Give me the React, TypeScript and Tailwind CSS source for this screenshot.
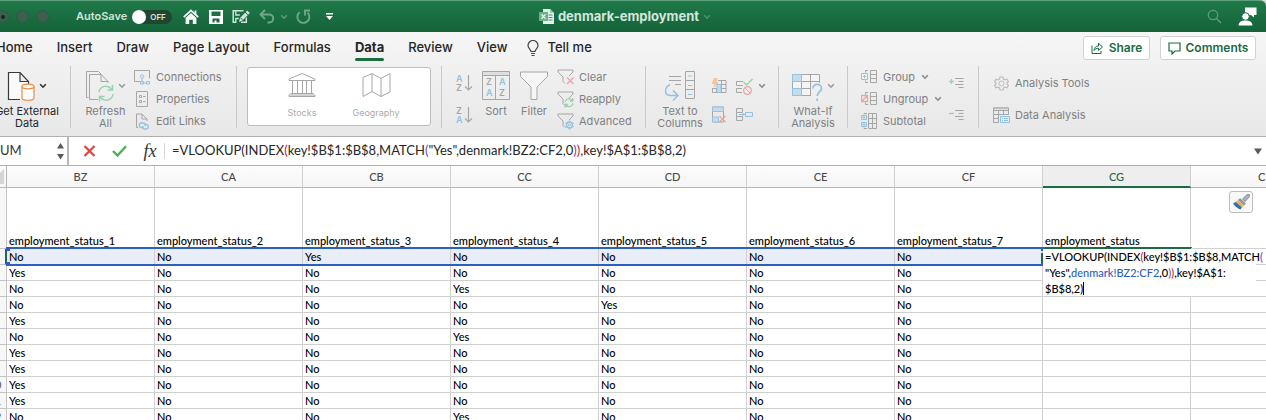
import React from "react";

const G = "#a6a6a6";
const B = "#93c3e2";
const GR = "#98d3b0";
const R = "#f0a3a3";

type IconProps = { w: number; h: number; children: React.ReactNode; stroke?: string };
function Icon({ w, h, children, stroke = G }: IconProps) {
  return (
    <svg width={w} height={h} viewBox={`0 0 ${w} ${h}`} fill="none" stroke={stroke} strokeWidth="1" className="block shrink-0" aria-hidden="true">
      {children}
    </svg>
  );
}

function Chevron({ color = "#8a8a8a" }: { color?: string }) {
  return (
    <Icon w={8} h={6} stroke={color}>
      <path d="M1.2 1.2 4 4.2 6.8 1.2" strokeWidth="1.6" />
    </Icon>
  );
}

function Letter({ x, y, c, children, s = 9 }: { x: number; y: number; c: string; children: string; s?: number }) {
  return (
    <text x={x} y={y} fill={c} stroke="none" fontSize={s} fontFamily="Inter, sans-serif" fontWeight="600">
      {children}
    </text>
  );
}

function TitleBar() {
  return (
    <header className="grid h-8 shrink-0 grid-cols-[1fr_auto_1fr] items-center rounded-tr-md border-t border-[#5f9f7e] bg-linear-to-b from-[#1f7a49] to-[#156239] text-white">
      <div className="-ml-1 flex items-center">
        <div className="flex gap-[7px]">
          <span className="flex size-[13px] items-center justify-center rounded-full border border-[#2b5a41] bg-[#3f5f4e]">
            <span className="size-1 rounded-full bg-[#0e2a1b]" />
          </span>
          <span className="size-[13px] rounded-full border border-[#2b5a41] bg-[#3f5f4e]" />
          <span className="size-[13px] rounded-full border border-[#2b5a41] bg-[#3f5f4e]" />
        </div>
        <span className="ml-[27px] text-[11px] font-semibold text-[#cfe5d9]">AutoSave</span>
        <button aria-label="AutoSave off" className="ml-[5px] flex h-3.5 w-10 items-center rounded-full bg-[#23452f]">
          <span className="size-3.5 rounded-full bg-white" />
          <span className="ml-1 text-[8px] font-semibold text-[#d5e5dc]">OFF</span>
        </button>
        <button aria-label="Home" className="ml-[11px]">
          <Icon w={16} h={15} stroke="#fff">
            <path d="M.8 8.2 8 1.400l7.200 6.800M12.500 1.500v4" strokeWidth="1.8" />
            <path d="M2.600 9 8 4l5.400 5v6H9.800v-4.200H6.200V15H2.600z" fill="#fff" stroke="none" />
          </Icon>
        </button>
        <button aria-label="Save" className="ml-2.5">
          <Icon w={14} h={14} stroke="none">
            <path fillRule="evenodd" d="M0 0h14v14H0zM2.500 1.500v4.500h9v-4.500zM3.500 8.500v4h2v-2h2v2h3v-4z" fill="#fff" />
          </Icon>
        </button>
        <button aria-label="Save as" className="ml-[9px]">
          <Icon w={18} h={15} stroke="#cfe5d9">
            <path d="M11.500 1.700H1.200v11.500h3M14.300 8.500v4.700H9" strokeWidth="1.500" />
            <path d="M3.800 1.500V6h4M3.800 13.500V9.500h3" strokeWidth="1.300" />
            <path d="M7 13l1-4 7.200-7.500 2.600 2.500-7.300 7.500z" fill="#cfe5d9" stroke="none" />
            <path d="M13 3l2.800 2.800M8.500 8.800l2 2" stroke="#1a6c41" />
          </Icon>
        </button>
        <button aria-label="Undo" className="ml-[9px]">
          <Icon w={16} h={15} stroke="#6fa78a">
            <path d="M6 1 1.500 5.500 6 10M2 5.500h8.200a4 4 0 0 1 0 8H8.500" strokeWidth="1.900" />
          </Icon>
        </button>
        <button aria-label="Undo list" className="ml-[5px]"><Chevron color="#5f9c7c" /></button>
        <button aria-label="Repeat" className="ml-2">
          <Icon w={15} h={15} stroke="#6fa78a">
            <path d="M3.600 3.200a6 6 0 1 0 8 .4M9 6.500V1.500h5" strokeWidth="1.900" />
          </Icon>
        </button>
        <button aria-label="Customize toolbar" className="ml-3.5">
          <Icon w={9} h={9} stroke="none">
            <path d="M1 1h7v1.500H1zM1 4h7L4.500 8z" fill="#fff" />
          </Icon>
        </button>
      </div>
      <div className="flex items-center pr-4">
        <Icon w={15} h={15} stroke="none">
          <path d="M4 0h7l4 4v11H4z" fill="#e7f1ec" />
          <path d="M11 0v4h4z" fill="#9cc4ae" />
          <path d="M9.500 6h4M9.500 8.500h4M9.500 11h4" stroke="#3f9a69" />
          <path d="M0 3h9v9H0z" fill="#6db08c" />
          <path d="M2.500 5.300l4 4.400M6.500 5.300l-4 4.400" stroke="#fff" strokeWidth="1.200" />
        </Icon>
        <h1 className="ml-1 text-[13px] font-bold text-[#d3e7dc]">denmark-employment</h1>
        <span className="ml-1"><Chevron color="#4f9270" /></span>
      </div>
      <div className="flex items-center justify-end gap-4 pr-[9px]">
        <button aria-label="Search">
          <Icon w={15} h={15} stroke="#5f9c7c">
            <circle cx="6" cy="6" r="4.700" strokeWidth="1.300" />
            <path d="M9.500 9.500 14 14" strokeWidth="1.500" />
          </Icon>
        </button>
        <button aria-label="Account">
          <Icon w={19} h={19} stroke="none">
            <path d="M7 .5h11.500v7.500H16v2.500L13 8H7z" fill="#fff" />
            <circle cx="7.500" cy="9.500" r="3.800" fill="#fff" stroke="#1a6c41" />
            <path d="M.5 18.500c.5-4 3-5 7-5s6.500 1 7 5z" fill="#fff" />
          </Icon>
        </button>
      </div>
    </header>
  );
}

function Tabs() {
  const tabs = ["Home", "Insert", "Draw", "Page Layout", "Formulas", "Data", "Review", "View"];
  return (
    <nav className="flex h-[30px] shrink-0 items-center justify-between bg-linear-to-b from-[#f6f6f6] to-[#f1f1f1] pt-0.5 pr-2.5">
      <div className="-ml-1 flex items-center gap-6 text-[13px] font-medium text-[#262626]">
        {tabs.map((t) => (
          <button key={t} className={t === "Data" ? "relative font-bold" : ""}>
            {t}
            {t === "Data" && <span className="absolute inset-x-0 -bottom-[3px] h-[3px] rounded-full bg-[#1a6c41]" />}
          </button>
        ))}
        <button className="-ml-1 flex items-center gap-2">
          <Icon w={12} h={16} stroke="#444">
            <path d="M4 11.500c0-2-3-3-3-6a5 5 0 0 1 10 0c0 3-3 4-3 6zM4 13.500h4M4.500 15.500h3" strokeWidth="1.200" />
          </Icon>
          Tell me
        </button>
      </div>
      <div className="flex gap-2.5 text-[12px] font-semibold text-[#1a6c41]">
        <button className="flex h-6 w-[67px] items-center justify-center gap-1.5 rounded-[3px] border border-[#d2d2d2] bg-white">
          <Icon w={12} h={12} stroke="#1a6c41">
            <path d="M1 3.500v8h9V9M3 8.500C3.200 5.500 5 4 7.500 4V1.200L11.500 5 7.500 8.500V6.200C5.500 6.200 4 7 3 8.500z" />
          </Icon>
          Share
        </button>
        <button className="flex h-6 w-24 items-center justify-center gap-[5px] rounded-[3px] border border-[#d2d2d2] bg-white">
          <Icon w={13} h={13} stroke="#1a6c41">
            <path d="M1 1h11v8H7l-3 3V9H1z" strokeWidth="1.200" />
          </Icon>
          Comments
        </button>
      </div>
    </nav>
  );
}

function Group({ className, children }: { className: string; children: React.ReactNode }) {
  return <div className={"flex h-[62px] shrink-0 items-start border-r border-[#c9c9c9] " + className}>{children}</div>;
}

function Small({ icon, label, chevron }: { icon: React.ReactNode; label: string; chevron?: boolean }) {
  return (
    <button className="flex h-[22px] shrink-0 items-center text-[11px] text-[#808080]">
      <span className="mr-1.5 flex w-4 justify-center">{icon}</span>
      {label}
      {chevron && <span className="ml-1.5"><Chevron /></span>}
    </button>
  );
}

function Big({ icon, lines, chevron, className }: { icon: React.ReactNode; lines: string[]; chevron?: string; className: string }) {
  return (
    <button className={"flex flex-col items-center text-[11px] leading-3 " + className}>
      <span className="flex h-[39px] items-center gap-1">
        {icon}
        {chevron && <Chevron color={chevron} />}
      </span>
      {lines.map((l) => (
        <span key={l} className="whitespace-nowrap">{l}</span>
      ))}
    </button>
  );
}

function Funnel({ children }: { children: React.ReactNode }) {
  return (
    <Icon w={17} h={17}>
      <path d="M8 14.500 6 12.500V8L1 3V1h15v2l-4 4" />
      {children}
    </Icon>
  );
}

function Cycle() {
  return <path d="M8 11a4.300 4.300 0 0 1 7.500-1.500M15.800 7v3h-3M16 12.500a4.300 4.300 0 0 1-7.500 1.500M8.200 16.500v-3h3" stroke={GR} strokeWidth="1.300" />;
}

function Bracket({ children }: { children: React.ReactNode }) {
  return (
    <Icon w={16} h={16}>
      <path d="M9.500 1.500h6v12h-6zM9.500 5.500h6M9.500 9.500h6M7 1.500H4.500v2M7 13.500H4.500v-2" />
      {children}
    </Icon>
  );
}

function Ribbon() {
  return (
    <div className="flex h-[74px] shrink-0 overflow-hidden bg-linear-to-b from-[#f1f1f1] to-[#e8e8e8] pt-1">
      <Group className="w-[71px]">
        <Big
          className="-ml-2 w-[70px] text-[#262626]"
          lines={["Get External", "Data"]}
          chevron="#333"
          icon={
            <Icon w={28} h={30} stroke="#383838">
              <path d="M13 28.500H1.500v-27H13l8.500 9V13M13 1.500v9h8.500" fill="#fafafa" strokeWidth="1.200" />
              <path d="M15 15.500v11.500c0 3 12 3 12 0V15.500" fill="#fdfdfd" stroke="#ef8b3f" strokeWidth="1.200" />
              <ellipse cx="21" cy="15.500" rx="6" ry="2.300" fill="#fdfdfd" stroke="#ef8b3f" strokeWidth="1.200" />
            </Icon>
          }
        />
      </Group>
      <Group className="w-[166px]">
        <Big
          className="ml-2.5 w-[49px] text-[#808080]"
          lines={["Refresh", "All"]}
          chevron="#9a9a9a"
          icon={
            <Icon w={28} h={32}>
              <path d="M2.500 27.500h-2v-26h12l3 3M12 29.500H3.500v-25H15l7 7V13M15 4.500v7h7" />
              <path d="M13 22a7 7 0 0 1 12.500-3M26.500 15v5h-5M27 24a7 7 0 0 1-12.500 3.500M13.500 31.500v-5h5" stroke={GR} strokeWidth="1.500" />
            </Icon>
          }
        />
        <div className="ml-1 flex flex-col">
          <Small label="Connections" icon={
            <Icon w={16} h={16}>
              <path d="M6.500 12.500h-6v-11h15v8" />
              <circle cx="8" cy="7.500" r="1.700" stroke={B} /><path d="M8 9.500v2.500M8 14h4" stroke={B} />
              <path d="M6.500 12.500h3v2.500h-3zM12.500 12.500h3v2.500h-3z" stroke={B} />
            </Icon>} />
          <Small label="Properties" icon={
            <Icon w={12} h={16}><path d="M.5.5h11v15H.5zM3.500 4.500h2v2h-2zM3.500 9.500h2v2h-2zM7 5.500h2.500M7 10.500h2.500" /></Icon>} />
          <Small label="Edit Links" icon={
            <Icon w={15} h={17}>
              <path d="M3 14.500H1.500V1H7l5 5v2M7 1v5h5" />
              <path d="M8 14.500H6a2.300 2.300 0 0 1 0-4.500h2.500a2.300 2.300 0 0 1 1.500 3M10 11.500h1.500a2.300 2.300 0 0 1 0 4.500H9.500a2.300 2.300 0 0 1-1.500-3" stroke={B} strokeWidth="1.400" />
            </Icon>} />
        </div>
      </Group>
      <Group className="w-[205px]">
        <div className="ml-2.5 mt-px flex h-[59px] w-[184px] justify-center rounded-[3px] border border-[#bdbdbd] bg-white text-[#ababab]">
          <button className="flex w-[74px] flex-col items-center pt-1 text-[9px]">
            <Icon w={28} h={26}>
              <path d="M1 8.500V7L14 1.500 27 7v1.500zM4.500 9v12M9.500 9v12M14.500 9v12M18.500 9v12M23.500 9v12M2.500 21.500h23M1 24.500v-1.500h26v1.500z" />
            </Icon>
            <span className="mt-2">Stocks</span>
          </button>
          <button className="flex w-[74px] flex-col items-center pt-1 text-[9px]">
            <Icon w={29} h={26}>
              <path d="M1 5.500 10 1.500l9 5 9-5V20l-9 4.500-9-5-9 5zM10 1.500v18M19 6.500v18" />
            </Icon>
            <span className="mt-2">Geography</span>
          </button>
        </div>
      </Group>
      <Group className="w-[204px]">
        <div className="ml-3.5 flex w-4 flex-col gap-3.5 pt-2">
          <button aria-label="Sort ascending">
            <Icon w={17} h={18}>
              <Letter x={0} y={8} c={B}>A</Letter><Letter x={0} y={17} c={G}>Z</Letter>
              <path d="M12.500 1v15M9 12.500l3.500 3.500 3.500-3.500" strokeWidth="1.200" />
            </Icon>
          </button>
          <button aria-label="Sort descending">
            <Icon w={17} h={18}>
              <Letter x={0} y={8} c={G}>Z</Letter><Letter x={0} y={17} c={B}>A</Letter>
              <path d="M12.500 1v15M9 12.500l3.500 3.500 3.500-3.500" strokeWidth="1.200" />
            </Icon>
          </button>
        </div>
        <Big className="ml-1.5 w-9 text-[#808080]" lines={["Sort"]} icon={
          <Icon w={28} h={29}>
            <path d="M.5.5h27v4H.5z" fill="#dedede" />
            <path d="M.5 4.500h27v24H.5zM13.500 4.500v24" />
            <Letter x={4} y={14} c={G}>Z</Letter><Letter x={4} y={25} c={B}>A</Letter>
            <Letter x={17} y={14} c={B}>A</Letter><Letter x={17} y={25} c={G}>Z</Letter>
          </Icon>} />
        <Big className="ml-0.5 w-9 text-[#808080]" lines={["Filter"]} icon={
          <Icon w={28} h={29}><path d="M.5 1h27v4.500L17 16v12.500h-6V16L.5 5.500z" fill="#f6f6f6" /></Icon>} />
        <div className="ml-[5px] flex flex-col">
          <Small label="Clear" icon={<Funnel><path d="M10 8.500l6.500 6.500M16.500 8.500 10 15" stroke={R} strokeWidth="1.300" /></Funnel>} />
          <Small label="Reapply" icon={<Funnel><Cycle /></Funnel>} />
          <Small label="Advanced" icon={
            <Funnel>
              <circle cx="12.500" cy="12" r="3" stroke={B} strokeWidth="1.300" />
              <circle cx="12.500" cy="12" r="1" stroke={B} />
              <path d="M12.500 7.500v2M12.500 14.500v2M8.500 9.800l1.800 1M14.700 13.200l1.800 1M8.500 14.200l1.800-1M14.700 10.800l1.800-1" stroke={B} strokeWidth="1.500" />
            </Funnel>} />
        </div>
      </Group>
      <Group className="w-[133px]">
        <Big className="ml-2.5 w-12 text-[#808080]" lines={["Text to", "Columns"]} icon={
          <Icon w={31} h={30}>
            <path d="M4 5.500h12M4 9.500h12M10 13.500h6M20.500.5h9v27h-9zM20.500 9.500h9M20.500 18.500h9" />
            <path d="M23 5h4M23 14.500h4M23 23.500h4" stroke={B} />
            <path d="M5 13.500C-1.500 17-1 24.500 6 24.500h6M8 19.500l5 5-5 5" stroke={B} strokeWidth="1.500" />
          </Icon>} />
        <div className="ml-1.5 grid grid-cols-[26px_16px_14px] grid-rows-[28px_28px] items-center pt-1.5">
          <button aria-label="Flash fill">
            <Icon w={17} h={17}>
              <path d="M6 5.500V2.500M8 2.500h8v12H2.500V10M6 6.500h10M2.500 10.500H16M6.500 10v4.500M11.500 2.500v12" />
              <path d="M7 6.500h4v8H7z" fill="#c5dcea" stroke={B} />
              <path d="M4 0h4L6 4h3l-6 7 1.500-5H1.500z" fill="#f6c39a" stroke="none" />
            </Icon>
          </button>
          <button aria-label="Data validation">
            <Icon w={17} h={17}>
              <path d="M7 3.500H.5v4H7M6 10.500H.5v4H6" />
              <path d="M7.500 4l3 3 6-6" stroke={GR} strokeWidth="1.400" />
              <circle cx="11.500" cy="12.500" r="3.800" stroke={R} strokeWidth="1.300" /><path d="M9 10l5 5" stroke={R} />
            </Icon>
          </button>
          <span className="ml-1.5"><Chevron /></span>
          <button aria-label="Remove duplicates">
            <Icon w={17} h={17}>
              <path d="M2.500 1h11v15h-11z" /><path d="M2.500 1h11v4.500h-11zM2.500 11h6v5h-6z" fill="#c5dcea" stroke={B} />
              <path d="M9.500 10l6 6M15.500 10l-6 6" stroke={R} strokeWidth="1.300" />
            </Icon>
          </button>
          <button aria-label="Consolidate">
            <Icon w={17} h={15}>
              <path d="M.5 1.500h6v4h-6zM.5 9.500h6v4h-6zM.5 5.500v4" />
              <path d="M9.500 5.500h7v4h-7zM3 7.500h6M6 5.500l2 2-2 2" stroke={B} />
            </Icon>
          </button>
        </div>
      </Group>
      <Group className="w-[69px]">
        <Big className="w-[68px] text-[#808080]" lines={["What-If", "Analysis"]} chevron="#9a9a9a" icon={
          <Icon w={31} h={31}>
            <path d="M.5 4.500h27v21H.5z" fill="#f4f4f4" />
            <path d="M9.500 4.500v21M18.500 4.500v21M.5 11.500h27M.5 18.500h27" />
            <path d="M.5 4.500h9v7h-9zM.5 18.500h9v7h-9z" fill="#c5dcea" stroke={B} />
            <path d="M19 13h11v18H19z" fill="#efefef" stroke="none" />
            <path d="M21 18.500c0-5.500 8.500-5.500 8.500 0 0 3.500-4.300 3-4.300 7.500M25.200 28.500V31" stroke={B} strokeWidth="1.800" />
          </Icon>} />
      </Group>
      <Group className="w-[131px]">
        <div className="ml-[13px] flex w-[88px] flex-col">
          <Small chevron label="Group" icon={<Bracket><path d="M.5 4.500h6v6h-6zM2 7.500h3M3.500 6v3" stroke={B} /></Bracket>} />
          <Small chevron label="Ungroup" icon={<Bracket><path d="M.5 4.500h6v6h-6zM.5 10.500l6-6" stroke={R} strokeWidth="1.300" /></Bracket>} />
          <Small label="Subtotal" icon={
            <Icon w={16} h={16}>
              <path d="M7.500.5h8v15h-8zM7.500 5.500h8M7.500 10.500h8M11.500.5v15M3 1.500V.5h3M3 14.500v1h3" />
              <path d="M.5 2.500h5v4h-5zM.5 9.500h5v4h-5zM1.500 4.500h3M3 3v3M1.500 11.500h3M3 10v3" stroke={B} />
            </Icon>} />
        </div>
        <div className="flex flex-col gap-5 pt-[11px]">
          <button aria-label="Show detail">
            <Icon w={15} h={12}><path d="M6 1.500h8.500M9.500 4.500h5M6 7.500h8.500M9.500 10.500h5" /><path d="M0 4.500h5M2.500 2v5" stroke={GR} strokeWidth="1.300" /></Icon>
          </button>
          <button aria-label="Hide detail">
            <Icon w={15} h={12}><path d="M6 1.500h8.500M9.500 4.500h5M6 7.500h8.500M9.500 10.500h5" /><path d="M0 4.500h5" stroke={R} strokeWidth="1.300" /></Icon>
          </button>
        </div>
      </Group>
      <div className="ml-3.5 flex flex-col gap-2.5 pt-1.5">
        <Small label="Analysis Tools" icon={
          <Icon w={15} h={15} stroke="#bdbdbd">
            <path d="M6 1h3l.5 2 1.500.8 2-.6 1.400 2.500L13 7v1l1.400 1.300-1.400 2.500-2-.6-1.500.8L9 14H6l-.5-2-1.500-.8-2 .6L.6 9.300 2 8V7L.6 5.700 2 3.200l2 .6L5.500 3z" strokeWidth="1.200" />
            <circle cx="7.500" cy="7.500" r="2.500" />
          </Icon>} />
        <Small label="Data Analysis" icon={
          <Icon w={17} h={17}>
            <path d="M6 15.500H.5V1h15v7" /><path d="M.5 1h15v2.500H.5z" fill="#dedede" /><path d="M.5 7.500h15M.5 11.500H6M5.500 4v11.500M10.500 4v4" />
            <path d="M7.500 9.500h9v6h-9zM9 11.500h1M11 11.500h4M9 13.500h1M11 13.500h4" stroke={B} />
          </Icon>} />
      </div>
    </div>
  );
}

const RED = "text-[#d9101f]";
const PURPLE = "text-[#7b3fb5]";

function FormulaBar() {
  return (
    <div className="flex h-[30px] shrink-0 items-stretch border-y border-[#b0b0b0] bg-white">
      <div className="flex w-[69px] items-center border-r-2 border-[#b9b9b9]">
        <input aria-label="Name box" defaultValue="SUM" className="-ml-[7px] w-[60px] bg-transparent font-[Lato] text-[13px] text-[#333] outline-none" />
        <button aria-label="Change name" className="ml-[3px]">
          <Icon w={9} h={18} stroke="none"><path d="M1 6.500 4.500 1 8 6.500zM1 12h7l-3.500 5.500z" fill="#595959" /></Icon>
        </button>
      </div>
      <div className="flex flex-1 items-center">
        <button aria-label="Cancel" className="ml-3.5">
          <Icon w={13} h={12} stroke="#e0443e"><path d="M1.500 1l10 10M11.500 1l-10 10" strokeWidth="2.200" /></Icon>
        </button>
        <button aria-label="Enter" className="ml-4">
          <Icon w={15} h={12} stroke="#4caf50"><path d="M1 6l4.500 4.500L14 1.200" strokeWidth="2.400" /></Icon>
        </button>
        <button aria-label="Insert function" className="ml-[15px] w-4 font-['Liberation_Serif'] text-[18px] leading-5 italic text-[#333]">fx</button>
        <span className="ml-1.5 h-4 w-px bg-[#d5d5d5]" />
        <div role="textbox" aria-label="Formula" contentEditable suppressContentEditableWarning className="ml-[7px] flex-1 font-[Lato] text-[13px] whitespace-nowrap text-[#262626] outline-none">
          =VLOOKUP(INDEX<span className={RED}>(</span>key!$B$1:$B$8,MATCH<span className={PURPLE}>(</span>"Yes",denmark!BZ2:CF2,0<span className={PURPLE}>)</span><span className={RED}>)</span>,key!$A$1:$B$8,2)
        </div>
        <button aria-label="Expand formula bar" className="mr-1">
          <Icon w={8} h={7} stroke="none"><path d="M0 .5h8L4 6.500z" fill="#595959" /></Icon>
        </button>
      </div>
    </div>
  );
}

const columns = ["BZ", "CA", "CB", "CC", "CD", "CE", "CF", "CG"];
const yesColumn = [2, 0, 3, 4, 0, 3, 0, 0, 0, 0, 3];
const yesRows = [true, true, false, false, true, false, true, true, true, true, false];
const cell = "border-r border-b border-[#d0d0d0] p-0 pl-0.5 text-left align-bottom";

function cellText(row: number, col: number) {
  if (col > 6) return null;
  const hit = yesColumn[row] === col && (col !== 0 || yesRows[row]);
  return hit ? "Yes" : "No";
}

function CellEditor() {
  return (
    <div role="textbox" aria-label="Cell CG2" className="absolute top-0 left-0 z-20 w-[213px] bg-white pl-0.5 leading-4 whitespace-nowrap">
      <div>=VLOOKUP(INDEX<span className={RED}>(</span>key!$B$1:$B$8,MATCH<span className={PURPLE}>(</span></div>
      <div>"Yes",<span className="text-[#2b5fc0]">denmark!BZ2:CF2</span>,0<span className={PURPLE}>)</span><span className={RED}>)</span>,key!$A$1:</div>
      <div className="h-[15px]"><span className="border-r border-black">$B$8,2)</span></div>
      <span className="absolute top-1 -left-0.5 h-2.5 w-0.5 bg-[#1a6c41]" />
    </div>
  );
}

function Selection() {
  const handle = "absolute size-1 bg-[#2b5fc0]";
  return (
    <div className="pointer-events-none absolute -top-0.5 left-0 z-10 h-[19px] w-[1036px] border-y-2 border-[#2b5fc0]">
      <span className={handle + " -top-0.5 -left-px"} />
      <span className={handle + " -bottom-0.5 -left-px"} />
      <span className={handle + " -top-0.5 -right-0.5"} />
      <span className={handle + " -right-0.5 -bottom-0.5"} />
    </div>
  );
}

function Sheet() {
  const rowHead = "border-r border-b border-[#c4c4c4] bg-[#f7f7f7] p-0 text-center text-[11px] font-normal text-[#555]";
  return (
    <div className="min-h-0 flex-1 overflow-hidden">
      <table className="-ml-4 w-[calc(100%+92px)] table-fixed border-separate border-spacing-0 font-[Lato] text-[11px] leading-[15px] font-medium text-black">
        <colgroup>
          <col className="w-[23px]" />
          {columns.map((c) => <col key={c} className="w-[148px]" />)}
          <col />
        </colgroup>
        <thead>
          <tr className="h-[22px] bg-linear-to-b from-[#fcfcfc] to-[#f5f5f5] text-[#4a4a4a]">
            <th className="border-r border-b border-[#b5b5b5] p-0">
              <div className="flex justify-end pr-0.5"><Icon w={15} h={15} stroke="none"><path d="M15 0v15H0z" fill="#d4d4d4" /></Icon></div>
            </th>
            {columns.map((c) => (
              <th key={c} className={c === "CG" ? "border-r border-b-2 border-r-[#d0d0d0] border-b-[#1a6c41] bg-[#eeeeee] p-0 font-medium text-[#1a6c41]" : "border-r border-b border-r-[#d0d0d0] border-b-[#b5b5b5] p-0 font-medium"}>{c}</th>
            ))}
            <th className="border-r border-b border-r-[#d0d0d0] border-b-[#b5b5b5] p-0 font-medium">CH</th>
          </tr>
        </thead>
        <tbody>
          <tr className="h-[61px]">
            <th className={rowHead}>1</th>
            {columns.map((c, i) => (
              <td key={c} className={cell + (c === "CG" ? " relative" : "")}>
                {c === "CG" ? "employment_status" : `employment_status_${i + 1}`}
                {c === "CG" && <span className="absolute -right-0.5 -bottom-px left-0 h-0.5 bg-[#1a6c41]" />}
              </td>
            ))}
            <td className={cell + " relative"}>
              <button aria-label="Paste options" className="absolute top-[3px] left-[38px] flex h-[22px] w-6 items-center justify-center rounded-[3px] border border-[#bdbdbd] bg-[#f8f8f8]">
                <Icon w={17} h={16} stroke="none">
                  <path d="M9.500 5 14 .5a1.600 1.600 0 0 1 2.300 2.300L12 7.500z" fill="#a9b4bf" stroke="#66727d" strokeWidth=".7" />
                  <path d="M7 4 13 9.500l-2 2L5 6z" fill="#8d9aa6" />
                  <path d="M5 6 11 11.500l-2.500 2.500L2.500 8z" fill="#f0b04e" />
                  <path d="M2.800 8 8.800 13.500 7.500 15.500C4.500 14.500 1.500 12 0 9.500z" fill="#2a70b8" />
                </Icon>
              </button>
            </td>
          </tr>
          {yesColumn.map((_, r) => (
            <tr key={r} className="h-4">
              <th className={rowHead + " h-4 leading-[15px]" + (r === 0 ? " border-r-2 border-r-[#1a6c41]" : "")}>{r + 2}</th>
              {columns.map((c, i) => (
                <td key={c} className={cell + (r === 0 && i < 7 ? " bg-[#e9edf8]" : "") + (r === 0 && (i === 0 || i === 7) ? " relative" : "")}>
                  {cellText(r, i)}
                  {r === 0 && i === 0 && <Selection />}
                  {r === 0 && i === 7 && <CellEditor />}
                </td>
              ))}
              <td className={cell} />
            </tr>
          ))}
        </tbody>
      </table>
    </div>
  );
}

export default function App() {
  return (
    <div className="flex h-screen flex-col overflow-hidden bg-[#d9d9d9] font-[Inter,sans-serif]">
      <TitleBar />
      <Tabs />
      <Ribbon />
      <main className="flex min-h-0 flex-1 flex-col bg-white">
        <FormulaBar />
        <Sheet />
      </main>
    </div>
  );
}
